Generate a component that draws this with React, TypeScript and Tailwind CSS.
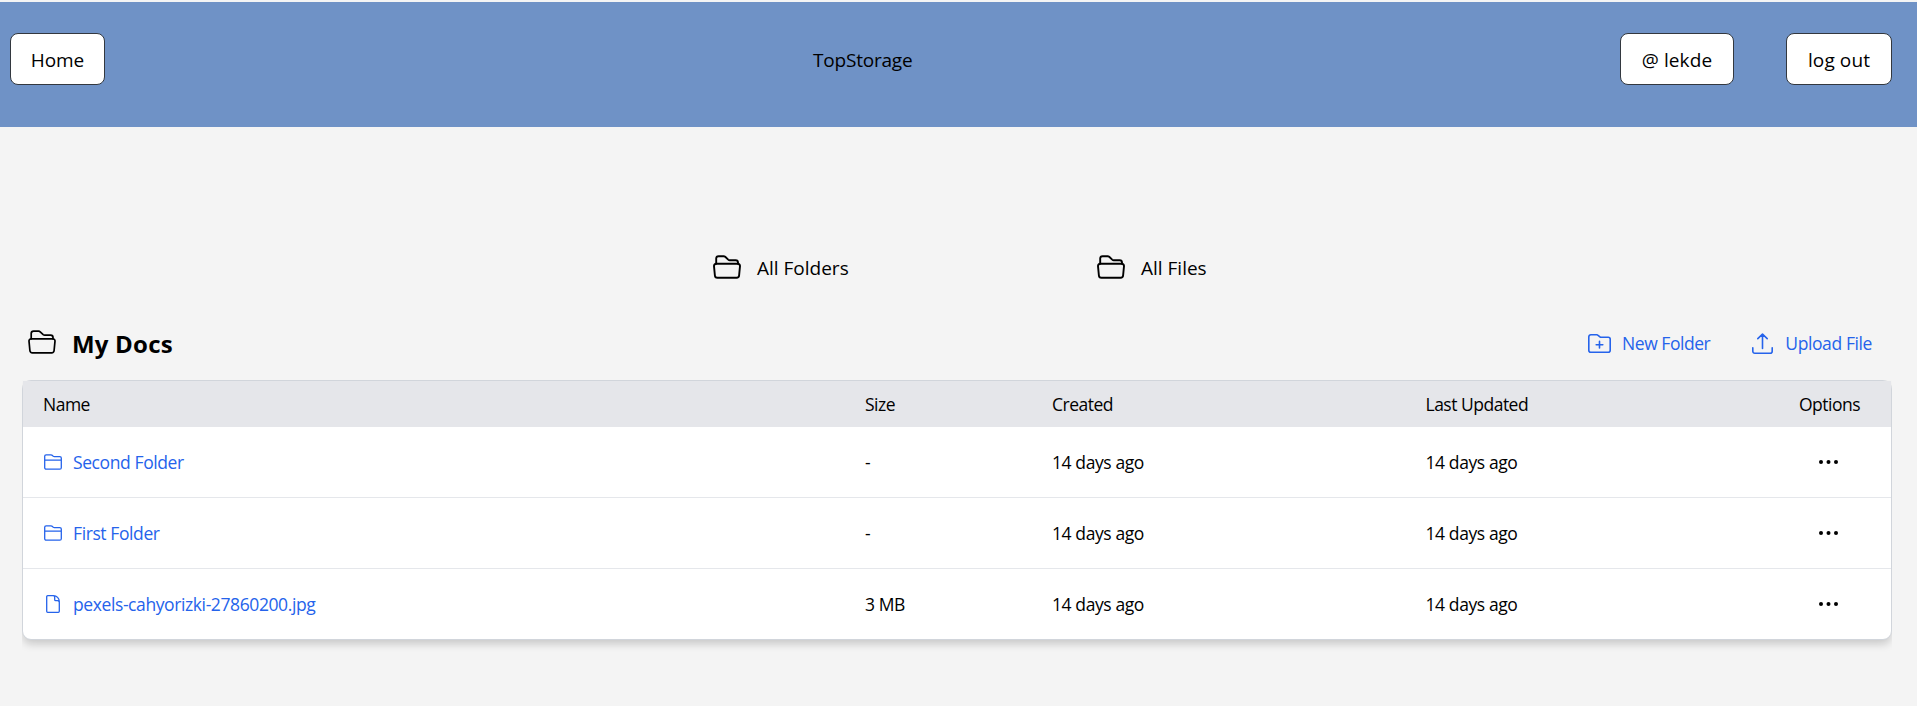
import React from "react";

type IconProps = { className?: string; strokeWidth?: number };

const OpenFolderIcon = ({ className, strokeWidth = 1.7 }: IconProps) => (
  <svg className={className} viewBox="0 0 28 24" fill="none" stroke="currentColor" strokeWidth={strokeWidth} strokeLinecap="round" strokeLinejoin="round">
    <path d="M3.200 8.800V3.600a2.400 2.400 0 0 1 2.400-2.400h5a2.400 2.400 0 0 1 1.600.6l3 2.800a2.400 2.400 0 0 0 1.600.6h5.800a2.400 2.400 0 0 1 2.400 2.400v1.200" />
    <path d="M3.200 8.800h21.600a2.200 2.200 0 0 1 2.200 2.400l-.9 9.300a2.500 2.500 0 0 1-2.500 2.300H4.400a2.500 2.500 0 0 1-2.500-2.300L1 11.200a2.200 2.200 0 0 1 2.200-2.400z" />
  </svg>
);

const NewFolderIcon = ({ className }: IconProps) => (
  <svg className={className} viewBox="0 0 23 19" fill="none" stroke="currentColor" strokeWidth="1.6" strokeLinecap="round" strokeLinejoin="round">
    <path d="M.8 2.800a2 2 0 0 1 2-2h6a2 2 0 0 1 1.300.5l1.800 1.500a2 2 0 0 0 1.300.5h7a2 2 0 0 1 2 2v10.900a2 2 0 0 1-2 2H2.800a2 2 0 0 1-2-2z" />
    <path d="M11.500 7.400v6.600M8.200 10.700h6.600" />
  </svg>
);

const UploadIcon = ({ className }: IconProps) => (
  <svg className={className} viewBox="0 0 21 21" fill="none" stroke="currentColor" strokeWidth="1.6" strokeLinecap="round" strokeLinejoin="round">
    <path d="M.8 14.800v3.400a2 2 0 0 0 2 2h15.400a2 2 0 0 0 2-2v-3.400M10.500 15.400V1.400M5.800 5.600l4.700-4.500 4.700 4.500" />
  </svg>
);

const FolderIcon = ({ className }: IconProps) => (
  <svg className={className} viewBox="0 0 18 16" fill="none" stroke="currentColor" strokeWidth="1.3" strokeLinejoin="round">
    <path d="M.7 2.200A1.400 1.400 0 0 1 2.100.8h4.700c.4 0 .7.1 1 .3l1.500 1.200c.3.200.6.300 1 .3h5.500a1.500 1.500 0 0 1 1.500 1.500v9.600a1.500 1.500 0 0 1-1.500 1.500H2.200a1.500 1.500 0 0 1-1.500-1.500zM.7 6.200h16.600" />
  </svg>
);

const FileIcon = ({ className }: IconProps) => (
  <svg className={className} viewBox="0 0 14 18" fill="none" stroke="currentColor" strokeWidth="1.3" strokeLinejoin="round">
    <path d="M.7 1.700a1 1 0 0 1 1-1H7.500a5.800 5.800 0 0 1 5.800 5.800v9.800a1 1 0 0 1-1 1H1.700a1 1 0 0 1-1-1zM7.300.7a1.800 1.800 0 0 1 1.400 1.700v2.300a1 1 0 0 0 1 1h1.800a1.800 1.800 0 0 1 1.700 1.400" />
  </svg>
);

const DotsIcon = ({ className }: IconProps) => (
  <svg className={className} viewBox="0 0 19 4" fill="currentColor">
    <circle cx="2" cy="2" r="2" />
    <circle cx="9.500" cy="2" r="2" />
    <circle cx="17" cy="2" r="2" />
  </svg>
);

const rows = [
  { name: "Second Folder", size: "-", kind: "folder" },
  { name: "First Folder", size: "-", kind: "folder" },
  { name: "pexels-cahyorizki-27860200.jpg", size: "3 MB", kind: "file" },
];

export default function App() {
  return (
    <div className="h-[706px] overflow-hidden bg-[#f4f4f4] pt-0.5 font-['Open_Sans','Noto_Sans',sans-serif] text-[19px] text-black">
      <header className="flex h-[125px] items-start bg-[#6f92c6] pt-[31px] pl-2.5">
        <button className="h-[52px] w-[95px] rounded-lg border border-[#33383f] bg-white pt-0.5 tracking-[-0.1px]">Home</button>
        <h1 className="ml-[708px] pt-px leading-[52px] tracking-[-0.2px]">TopStorage</h1>
        <button className="ml-auto h-[52px] w-[114px] rounded-lg border border-[#33383f] bg-white pt-0.5 tracking-[0.1px]">@ lekde</button>
        <button className="mr-[25px] ml-[52px] h-[52px] w-[106px] rounded-lg border border-[#33383f] bg-white pt-0.5 tracking-[0.1px]">log out</button>
      </header>
      <nav className="mt-[120px] flex h-10 items-center pl-[713px]">
        <a className="flex w-[384px] items-center gap-4">
          <OpenFolderIcon className="h-6 w-7" strokeWidth={1.9} />
          <span className="pt-0.5">All Folders</span>
        </a>
        <a className="flex items-center gap-4">
          <OpenFolderIcon className="h-6 w-7" strokeWidth={1.9} />
          <span className="pt-0.5">All Files</span>
        </a>
      </nav>
      <main className="px-[22px]">
        <div className="flex h-[93px] items-center pt-5 pl-1.5">
          <OpenFolderIcon className="mb-1 h-6 w-7" />
          <h2 className="ml-4 text-2xl font-bold tracking-[0.2px]">My Docs</h2>
          <button className="ml-auto flex items-center gap-[11px] text-[17.5px] tracking-[-0.45px] text-[#2563eb]">
            <NewFolderIcon className="h-[19px] w-[23px]" />
            <span>New Folder</span>
          </button>
          <button className="mr-[23px] ml-[42px] flex items-center gap-3 text-[17.5px] tracking-[-0.4px] text-[#2563eb]">
            <UploadIcon className="size-[21px]" />
            <span>Upload File</span>
          </button>
        </div>
        <div className="mr-[3px] overflow-hidden pb-6 text-[17.5px] tracking-[-0.4px]">
          <section className="rounded-[9px] border border-[#d1d5db] bg-white shadow-[0_5px_8px_-1px_rgba(0,0,0,0.18)]">
            <div className="flex h-[46px] items-center bg-[#e5e6ea] pl-5 tracking-[-0.5px]">
              <span className="w-[822px]">Name</span>
              <span className="w-[187px]">Size</span>
              <span className="w-[373.5px]">Created</span>
              <span className="w-[373.5px]">Last Updated</span>
              <span>Options</span>
            </div>
            {rows.map((r) => (
              <div key={r.name} className="flex h-[71px] items-center border-b border-[#e5e7eb] pl-5 last:h-[70px] last:border-b-0">
                <a className="flex w-[822px] items-center text-[#2563eb]">
                  <span className="flex w-[30px]">
                    {r.kind === "folder" ? <FolderIcon className="ml-px h-4 w-[18px]" /> : <FileIcon className="ml-[3px] h-[18px] w-3.5" />}
                  </span>
                  <span>{r.name}</span>
                </a>
                <span className="w-[187px]">{r.size}</span>
                <span className="w-[373.5px]">14 days ago</span>
                <span className="w-[393.5px]">14 days ago</span>
                <DotsIcon className="h-1 w-[19px]" />
              </div>
            ))}
          </section>
        </div>
      </main>
    </div>
  );
}
